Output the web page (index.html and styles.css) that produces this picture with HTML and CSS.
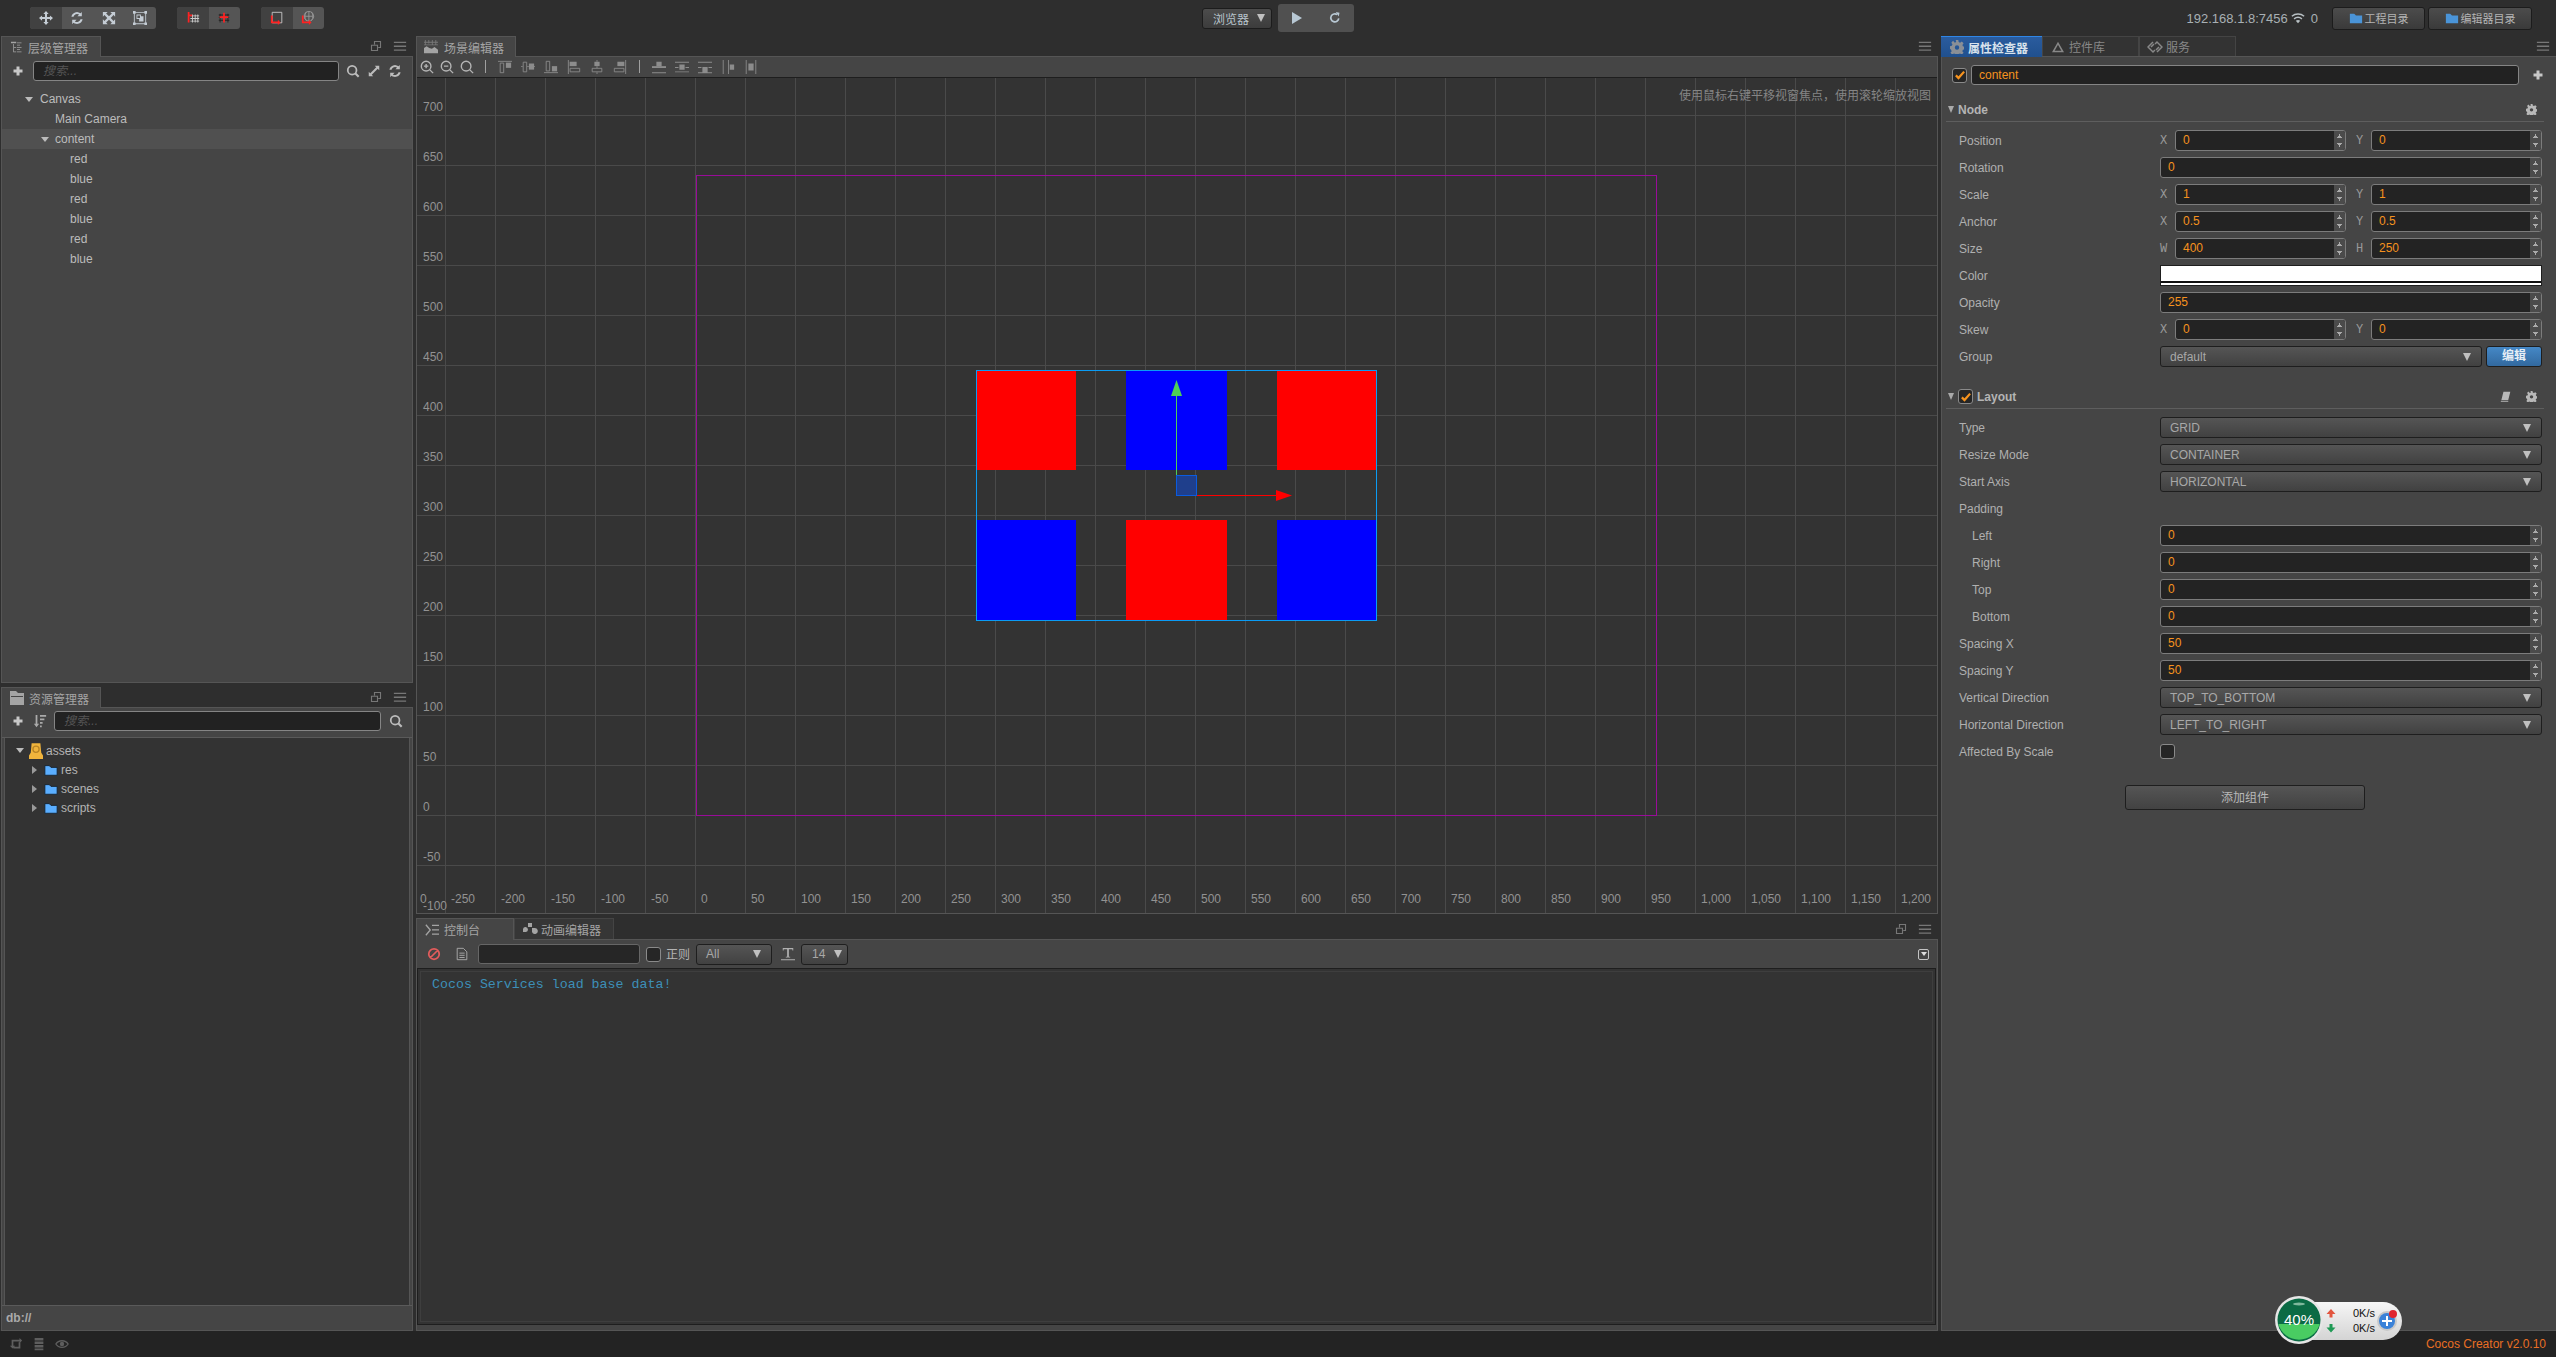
FILE: index.html
```html
<!DOCTYPE html>
<html>
<head>
<meta charset="utf-8">
<title>Cocos Creator v2.0.10</title>
<link rel="stylesheet" href="styles.css">
</head>
<body>

<svg class="defs" width="0" height="0">
	<symbol id="i-move" viewBox="0 0 16 16"><path d="M8 0l3 3.500H9.200v3.300h3.300V5L16 8l-3.500 3V9.200H9.200v3.300H11L8 16l-3-3.500h1.800V9.200H3.500V11L0 8l3.500-3v1.800h3.300V3.500H5z"/></symbol>
	<symbol id="i-rotate" viewBox="0 0 16 16"><path d="M13.500 1v5h-5l1.900-1.900A4.200 4.200 0 0 0 4 6.500H1.600a6.600 6.600 0 0 1 10.500-3.900zM2.500 15v-5h5l-1.900 1.900A4.200 4.200 0 0 0 12 9.500h2.400a6.600 6.600 0 0 1-10.500 3.900z"/></symbol>
	<symbol id="i-refresh" viewBox="0 0 16 16"><path fill="none" stroke="currentColor" stroke-width="2.200" d="M11 3.600A5.300 5.300 0 1 0 13 8.500"/><path d="M9 0l5 1-1 5z"/></symbol>
	<symbol id="i-scale" viewBox="0 0 16 16"><path d="M1 1h5.500L4.700 2.800 8 6l3.300-3.200L9.500 1H15v5.500l-1.800-1.800L10 8l3.200 3.300 1.800-1.800V15H9.500l1.800-1.800L8 10l-3.300 3.200L6.500 15H1V9.500l1.800 1.800L6 8 2.800 4.700 1 6.500z"/></symbol>
	<symbol id="i-rect" viewBox="0 0 16 16"><path d="M0 0h3v1h10V0h3v3h-1v10h1v3h-3v-1H3v1H0v-3h1V3H0zm2 3v10h1v1h10v-1h1V3h-1V2H3v1z"/><path d="M4 4h5v2h3v6H7V9H4zm1 1v3h3V5z"/></symbol>
	<symbol id="i-gridpivot" viewBox="0 0 16 16"><path fill="#ccc" d="M5 5h10v1H5zm0 3h10v1H5zm0 3h10v1H5zM7 4h1v9H7zm3 0h1v9h-1zm3 0h1v9h-1z"/><path fill="#f22" d="M2 1h2v3h3v2H4v7H2z"/></symbol>
	<symbol id="i-gridcenter" viewBox="0 0 16 16"><path fill="#222" d="M2 4h12v1H2zm0 3h12v1H2zm0 3h12v1H2zm1-7h1v10H3zm9 0h1v10h-1z"/><path fill="#f22" d="M7 2h2v4h4v2H9v5H7V8H3V6h4z"/></symbol>
	<symbol id="i-local" viewBox="0 0 16 16"><path fill="none" stroke="#ccc" d="M2.500 1.500h11v12h-11z"/><path fill="#f22" d="M1 5h2v7h6v-2l3 3-3 3v-2H1z"/></symbol>
	<symbol id="i-global" viewBox="0 0 16 16"><circle cx="9" cy="6" r="5.500" fill="none" stroke="#999"/><path fill="none" stroke="#999" d="M3.500 6h11M9 .5v11M6 1c-2 3-2 7 0 10M12 1c2 3 2 7 0 10"/><path fill="#f22" d="M1 5h2v7h6v-2l3 3-3 3v-2H1z"/></symbol>
	<symbol id="i-tree" viewBox="0 0 16 16"><path d="M0 1h7v2H0zm3 3h1v10h3v1H3V8h4v1H3zm5-2h6v1H8zm0 6h6v1H8zm0 6h6v1H8zM8 5h4v1H8zm0 6h4v1H8z"/></symbol>
	<symbol id="i-scene" viewBox="0 0 16 16"><path opacity=".55" d="M1 0h1v5H1zm4 0h1v4H5zm4 0h1v5H9zm4 0h1v6h-1zM0 2h16v1H0zm0 3h16v1H0z"/><path d="M0 15V9l3-2 3 2 3 1 3-2 4 3v4z"/></symbol>
	<symbol id="i-gear" viewBox="0 0 16 16"><path fill-rule="evenodd" d="M6.500 0h3l.4 2.300 1.600.7L13.500 1.700l2 2.100-1.300 1.900.7 1.600 2.100.5v3l-2.200.4-.7 1.600 1.400 1.900-2.100 2-1.900-1.300-1.600.6-.4 2.200h-3l-.4-2.200-1.600-.6-1.900 1.300-2.100-2 1.400-1.900-.7-1.600L0 10V7l2.100-.5.700-1.600-1.300-1.900 2-2.100L5.500 3l1.600-.7zM8 6a2.500 2.500 0 1 0 0 5 2.500 2.500 0 0 0 0-5z"/></symbol>
	<symbol id="i-tri" viewBox="0 0 16 16"><path fill-rule="evenodd" d="M8 1l8 14H0zm0 4l-4.500 8h9z"/></symbol>
	<symbol id="i-cloud" viewBox="0 0 16 16"><path fill="none" stroke="currentColor" stroke-width="1.500" d="M6 3L1 8l5 5 2-2M10 13l5-5-5-5-2 2"/><path fill="none" stroke="currentColor" stroke-width="1.500" d="M4 8l3-3M9 11l3-3"/></symbol>
	<symbol id="i-folder" viewBox="0 0 16 16"><path d="M1 3h5l2 2h7v9H1z"/></symbol>
	<symbol id="i-foldergrey" viewBox="0 0 16 16"><path d="M1 1h6l2 2h6v12H1z"/><path fill="#454545" d="M2 6h12v1H2z"/></symbol>
	<symbol id="i-popout" viewBox="0 0 16 16"><path fill="none" stroke="currentColor" stroke-width="1.500" d="M2 7h8v7H2zM6 6V2h8v8h-3"/></symbol>
	<symbol id="i-menu" viewBox="0 0 16 16"><path d="M1 3h14v1.500H1zm0 4.500h14V9H1zM1 12h14v1.500H1z"/></symbol>
	<symbol id="i-plus" viewBox="0 0 16 16"><path d="M6 2h4v4h4v4h-4v4H6v-4H2V6h4z"/></symbol>
	<symbol id="i-search" viewBox="0 0 16 16"><path fill="none" stroke="currentColor" stroke-width="2" d="M7 2a5 5 0 1 0 0 10A5 5 0 0 0 7 2z"/><path fill="none" stroke="currentColor" stroke-width="2.500" d="M10.500 10.500l4 4"/></symbol>
	<symbol id="i-expand" viewBox="0 0 16 16"><path d="M9 1h6v6l-2-2-8 8 2 2H1V9l2 2 8-8z"/></symbol>
	<symbol id="i-sort" viewBox="0 0 16 16"><path d="M3 1h2v10h2l-3 4-3-4h2zM8 1h7v2H8zm0 4h5v2H8zm0 4h3v2H8zm0 4h2v2H8z"/></symbol>
	<symbol id="i-zoomin" viewBox="0 0 16 16"><path fill="none" stroke="currentColor" stroke-width="1.600" d="M7 1.500a5.500 5.500 0 1 0 0 11 5.500 5.500 0 0 0 0-11zM11 11l4 4M4.500 7h5M7 4.500v5"/></symbol>
	<symbol id="i-zoomout" viewBox="0 0 16 16"><path fill="none" stroke="currentColor" stroke-width="1.600" d="M7 1.500a5.500 5.500 0 1 0 0 11 5.500 5.500 0 0 0 0-11zM11 11l4 4M4.500 7h5"/></symbol>
	<symbol id="i-zoomreset" viewBox="0 0 16 16"><path fill="none" stroke="currentColor" stroke-width="1.600" d="M7 1.500a5.500 5.500 0 1 0 0 11 5.500 5.500 0 0 0 0-11zM11 11l4 4"/></symbol>
	<symbol id="a-top" viewBox="0 0 16 16"><path d="M0 1h16v1H0z"/><path fill="none" stroke="currentColor" d="M2.500 3.500h4v11h-4z"/><path d="M9 3h6v6H9z"/></symbol>
	<symbol id="a-vmid" viewBox="0 0 16 16"><path d="M0 7h2v1H0zm7 0h2v1H7zm7 0h2v1h-2z"/><path fill="none" stroke="currentColor" d="M2.500 2.500h4v11h-4z"/><path d="M9 4h6v7H9z"/></symbol>
	<symbol id="a-bot" viewBox="0 0 16 16"><path d="M0 14h16v1H0z"/><path fill="none" stroke="currentColor" d="M2.500 1.500h4v11h-4z"/><path d="M9 7h6v6H9z"/></symbol>
	<symbol id="a-left" viewBox="0 0 16 16"><path d="M1 0h1v16H1z"/><path d="M3 2h8v5H3z"/><path fill="none" stroke="currentColor" d="M3.500 9.500h11v4h-11z"/></symbol>
	<symbol id="a-hmid" viewBox="0 0 16 16"><path d="M7.500 0h1v2h-1zm0 7h1v2h-1zm0 7h1v2h-1z"/><path d="M5 2h6v5H5z"/><path fill="none" stroke="currentColor" d="M2.500 9.500h11v4h-11z"/></symbol>
	<symbol id="a-right" viewBox="0 0 16 16"><path d="M14 0h1v16h-1z"/><path d="M5 2h8v5H5z"/><path fill="none" stroke="currentColor" d="M1.500 9.500h11v4h-11z"/></symbol>
	<symbol id="d-top" viewBox="0 0 16 16"><path d="M0 8h16v1H0zM0 14h16v1H0zM5 2h6v5H5z"/><path d="M0 7h16v1H0z"/></symbol>
	<symbol id="d-mid" viewBox="0 0 16 16"><path d="M0 2h16v1H0zM0 13h16v1H0zM5 5h6v6H5zM0 8h4v1H0zm12 0h4v1h-4z"/></symbol>
	<symbol id="d-bot" viewBox="0 0 16 16"><path d="M0 2h16v1H0zM0 14h16v1H0zM5 8h6v6H5zM0 8h4v1H0zm12 0h4v1h-4z"/></symbol>
	<symbol id="d-left" viewBox="0 0 16 16"><path d="M2 0h1v16H2zm6 0h1v16H8zM10 5h5v6h-5z"/></symbol>
	<symbol id="d-hmid" viewBox="0 0 16 16"><path d="M2 0h1v16H2zm11 0h1v16h-1zM5 4h6v8H5z"/></symbol>
	<symbol id="i-check" viewBox="0 0 16 16"><path fill="none" stroke="#f7931e" stroke-width="3" d="M2.500 8.500l3.500 3.500 7.500-8.500"/></symbol>
	<symbol id="i-book" viewBox="0 0 16 16"><path d="M5 1h10l-3 12H2zM1.500 14H12v1.500H1z"/></symbol>
	<symbol id="i-console" viewBox="0 0 16 16"><path fill="none" stroke="currentColor" stroke-width="1.500" d="M1 2l5 6-5 6"/><path d="M8 2h8v1.500H8zm0 5h8v1.500H8zm0 5h8v1.500H8z"/></symbol>
	<symbol id="i-anim" viewBox="0 0 16 16"><path d="M1 8a2.500 2.500 0 1 1 3 3H1zm5-6h4v4H6zm4 5h3a3 3 0 1 1-3 4z"/></symbol>
	<symbol id="i-stop" viewBox="0 0 16 16"><path fill="none" stroke="#e25c5c" stroke-width="2" d="M8 2a6 6 0 1 0 0 12A6 6 0 0 0 8 2zM4 12L12 4"/></symbol>
	<symbol id="i-doc" viewBox="0 0 16 16"><path fill="none" stroke="currentColor" d="M2.500 1.500h7l4 4v9h-11zM5 7h6M5 9.500h6M5 12h6"/></symbol>
	<symbol id="i-font" viewBox="0 0 16 16"><path d="M2 1h12v3h-1V2.500H9V11h1.500v1h-5v-1H7V2.500H3V4H2zM0 14h16v1H0z"/></symbol>
	<symbol id="i-db" viewBox="0 0 16 16"><path d="M3 1h10v3H3zm0 4h10v3H3zm0 4h10v3H3zm0 4h10v2H3z"/></symbol>
	<symbol id="i-eye" viewBox="0 0 16 16"><path fill="none" stroke="currentColor" stroke-width="1.500" d="M1 8c3-5 11-5 14 0-3 5-11 5-14 0z"/><circle cx="8" cy="8" r="2.500"/></symbol>
	<symbol id="i-wifi" viewBox="0 0 16 16"><path fill="none" stroke="currentColor" stroke-width="1.600" d="M1 6c4-3.500 10-3.500 14 0M3.500 9c3-2.500 6-2.500 9 0"/><path d="M8 14l-2.500-3c1.500-1 3.500-1 5 0z"/></symbol>
	<symbol id="i-swap" viewBox="0 0 16 16"><path d="M3 3h9V1l3 3-3 3V5H5v5h2l-3 3-3-3h2zM13 6v7H5v-2h6V6z"/></symbol>
	<symbol id="i-lock" viewBox="0 0 16 18"><path d="M3 0h10l1 11 2 3v4H0v-4l2-3z" fill="#f0b43c"/><circle cx="8" cy="7" r="3.500" fill="none" stroke="#b88425" stroke-width="1.500"/></symbol>
</svg>

<div class="topbar">
	<div class="tb-left">
		<div class="tool-group">
			<span class="tool on"><svg class="ico14"><use href="#i-move"/></svg></span>
			<span class="tool"><svg class="ico14"><use href="#i-rotate"/></svg></span>
			<span class="tool"><svg class="ico14"><use href="#i-scale"/></svg></span>
			<span class="tool"><svg class="ico14"><use href="#i-rect"/></svg></span>
		</div>
		<div class="tool-group">
			<span class="tool on"><svg class="ico14"><use href="#i-gridpivot"/></svg></span>
			<span class="tool"><svg class="ico14"><use href="#i-gridcenter"/></svg></span>
		</div>
		<div class="tool-group">
			<span class="tool on"><svg class="ico14"><use href="#i-local"/></svg></span>
			<span class="tool"><svg class="ico14"><use href="#i-global"/></svg></span>
		</div>
	</div>
	<div class="tb-center">
		<div class="browser-select">浏览器<i class="arrow-down"></i></div>
		<div class="play-group">
			<span class="play-btn"><i class="play-tri"></i></span>
			<span class="play-btn"><svg class="ico12"><use href="#i-refresh"/></svg></span>
		</div>
	</div>
	<div class="tb-right">
		<span class="ip">192.168.1.8:7456</span>
		<svg class="ico14 wifi"><use href="#i-wifi"/></svg>
		<span class="wifi-count">0</span>
		<div class="dir-btn btn-project"><svg class="ico14 blue"><use href="#i-folder"/></svg>工程目录</div>
		<div class="dir-btn btn-editor"><svg class="ico14 blue"><use href="#i-folder"/></svg>编辑器目录</div>
	</div>
</div>

<div class="main">
	<div class="col col-left">
		<div class="panel panel-hierarchy">
			<div class="tabs">
				<div class="tab active tab-hier"><svg class="ico12"><use href="#i-tree"/></svg>层级管理器</div>
				<div class="tab-tools">
					<svg class="ico12"><use href="#i-popout"/></svg>
					<svg class="ico14"><use href="#i-menu"/></svg>
				</div>
			</div>
			<div class="panel-body">
				<div class="search-row">
					<svg class="ico12 plus"><use href="#i-plus"/></svg>
					<div class="search">搜索...</div>
					<svg class="ico14 sr-btn"><use href="#i-search"/></svg>
					<svg class="ico12 sr-btn"><use href="#i-expand"/></svg>
					<svg class="ico14 sr-btn"><use href="#i-rotate"/></svg>
				</div>
				<ul class="tree">
					<li class="d0"><i class="tw"></i>Canvas</li>
					<li class="d1">Main Camera</li>
					<li class="d1 selected"><i class="tw"></i>content</li>
					<li class="d2">red</li>
					<li class="d2">blue</li>
					<li class="d2">red</li>
					<li class="d2">blue</li>
					<li class="d2">red</li>
					<li class="d2">blue</li>
				</ul>
			</div>
		</div>
		<div class="panel panel-assets">
			<div class="tabs">
				<div class="tab active tab-asset"><svg class="ico16"><use href="#i-foldergrey"/></svg>资源管理器</div>
				<div class="tab-tools">
					<svg class="ico12"><use href="#i-popout"/></svg>
					<svg class="ico14"><use href="#i-menu"/></svg>
				</div>
			</div>
			<div class="panel-body">
				<div class="asset-tools">
					<svg class="ico12 plus"><use href="#i-plus"/></svg>
					<svg class="ico14 sort"><use href="#i-sort"/></svg>
					<div class="search">搜索...</div>
					<svg class="ico14 sr-btn"><use href="#i-search"/></svg>
				</div>
				<ul class="asset-tree">
					<li class="root"><i class="tw"></i><svg class="lock"><use href="#i-lock"/></svg>assets</li>
					<li><i class="tw closed"></i><svg class="ico14 fold"><use href="#i-folder"/></svg>res</li>
					<li><i class="tw closed"></i><svg class="ico14 fold"><use href="#i-folder"/></svg>scenes</li>
					<li><i class="tw closed"></i><svg class="ico14 fold"><use href="#i-folder"/></svg>scripts</li>
				</ul>
				<div class="db-path">db://</div>
			</div>
		</div>
	</div>

	<div class="col col-center">
		<div class="panel panel-scene">
			<div class="tabs">
				<div class="tab active tab-scene"><svg class="ico14"><use href="#i-scene"/></svg>场景编辑器</div>
				<div class="tab-tools">
					<svg class="ico14"><use href="#i-menu"/></svg>
				</div>
			</div>
			<div class="panel-body">
				<div class="scene-tools">
					<span class="zb"><svg class="ico14"><use href="#i-zoomin"/></svg></span>
					<span class="zb"><svg class="ico14"><use href="#i-zoomout"/></svg></span>
					<span class="zb"><svg class="ico14"><use href="#i-zoomreset"/></svg></span>
					<span class="sep"></span>
					<span class="ab"><svg class="ico14"><use href="#a-top"/></svg></span>
					<span class="ab"><svg class="ico14"><use href="#a-vmid"/></svg></span>
					<span class="ab"><svg class="ico14"><use href="#a-bot"/></svg></span>
					<span class="ab"><svg class="ico14"><use href="#a-left"/></svg></span>
					<span class="ab"><svg class="ico14"><use href="#a-hmid"/></svg></span>
					<span class="ab"><svg class="ico14"><use href="#a-right"/></svg></span>
					<span class="sep"></span>
					<span class="ab"><svg class="ico14"><use href="#d-top"/></svg></span>
					<span class="ab"><svg class="ico14"><use href="#d-mid"/></svg></span>
					<span class="ab"><svg class="ico14"><use href="#d-bot"/></svg></span>
					<span class="ab"><svg class="ico14"><use href="#d-left"/></svg></span>
					<span class="ab"><svg class="ico14"><use href="#d-hmid"/></svg></span>
				</div>
				<div class="scene-view">
					<!-- viewBox uses page coordinates -->
					<svg class="scene-svg" width="1520" height="835" viewBox="417 78 1520 835">
						<defs>
							<pattern id="grid" x="445" y="65" width="50" height="50" patternUnits="userSpaceOnUse">
								<path d="M.5 0V50M0 .5H50" stroke="#4a4a4a" fill="none"/>
							</pattern>
						</defs>
						<rect x="417" y="78" width="1520" height="835" fill="#333"/>
						<rect x="417" y="78" width="1520" height="835" fill="url(#grid)"/>
						<rect x="696.500" y="175.500" width="960" height="640" fill="none" stroke="#990c99"/>
						<rect x="977" y="371" width="99" height="99" fill="#f00"/>
						<rect x="1126" y="371" width="101" height="99" fill="#00f"/>
						<rect x="1277" y="371" width="99" height="99" fill="#f00"/>
						<rect x="977" y="520" width="99" height="100" fill="#00f"/>
						<rect x="1126" y="520" width="101" height="100" fill="#f00"/>
						<rect x="1277" y="520" width="99" height="100" fill="#00f"/>
						<rect x="976.500" y="370.500" width="400" height="250" fill="none" stroke="#0a9cf5"/>
						<path d="M1176.500 395V476" stroke="#4fce56" fill="none"/>
						<path d="M1176.500 380l5.500 16h-11z" fill="#4fce56"/>
						<path d="M1197 495.500H1277" stroke="#f00" fill="none"/>
						<path d="M1276 490l16 5.500-16 5.500z" fill="#f00"/>
						<rect x="1176.500" y="475.500" width="20" height="20" fill="#1f3f8c" stroke="#0a5be0"/>
						<g class="axis-y">
							<text x="423" y="111">700</text>
							<text x="423" y="161">650</text>
							<text x="423" y="211">600</text>
							<text x="423" y="261">550</text>
							<text x="423" y="311">500</text>
							<text x="423" y="361">450</text>
							<text x="423" y="411">400</text>
							<text x="423" y="461">350</text>
							<text x="423" y="511">300</text>
							<text x="423" y="561">250</text>
							<text x="423" y="611">200</text>
							<text x="423" y="661">150</text>
							<text x="423" y="711">100</text>
							<text x="423" y="761">50</text>
							<text x="423" y="811">0</text>
							<text x="423" y="861">-50</text>
							<text x="423" y="910">-100</text>
							<text x="420" y="903">0</text>
						</g>
						<g class="axis-x">
							<text x="451" y="903">-250</text>
							<text x="501" y="903">-200</text>
							<text x="551" y="903">-150</text>
							<text x="601" y="903">-100</text>
							<text x="651" y="903">-50</text>
							<text x="701" y="903">0</text>
							<text x="751" y="903">50</text>
							<text x="801" y="903">100</text>
							<text x="851" y="903">150</text>
							<text x="901" y="903">200</text>
							<text x="951" y="903">250</text>
							<text x="1001" y="903">300</text>
							<text x="1051" y="903">350</text>
							<text x="1101" y="903">400</text>
							<text x="1151" y="903">450</text>
							<text x="1201" y="903">500</text>
							<text x="1251" y="903">550</text>
							<text x="1301" y="903">600</text>
							<text x="1351" y="903">650</text>
							<text x="1401" y="903">700</text>
							<text x="1451" y="903">750</text>
							<text x="1501" y="903">800</text>
							<text x="1551" y="903">850</text>
							<text x="1601" y="903">900</text>
							<text x="1651" y="903">950</text>
							<text x="1701" y="903">1,000</text>
							<text x="1751" y="903">1,050</text>
							<text x="1801" y="903">1,100</text>
							<text x="1851" y="903">1,150</text>
							<text x="1901" y="903">1,200</text>
						</g>
					</svg>
					<div class="scene-hint">使用鼠标右键平移视窗焦点，使用滚轮缩放视图</div>
				</div>
			</div>
		</div>
		<div class="panel panel-console">
			<div class="tabs">
				<div class="tab active tab-console"><svg class="ico14"><use href="#i-console"/></svg>控制台</div>
				<div class="tab tab-anim"><svg class="ico16"><use href="#i-anim"/></svg>动画编辑器</div>
				<div class="tab-tools">
					<svg class="ico12"><use href="#i-popout"/></svg>
					<svg class="ico14"><use href="#i-menu"/></svg>
				</div>
			</div>
			<div class="panel-body">
				<div class="console-tools">
					<svg class="ico14 c-stop"><use href="#i-stop"/></svg>
					<svg class="ico14 c-doc"><use href="#i-doc"/></svg>
					<div class="c-input"></div>
					<span class="check c-check"></span>
					<span class="c-regex">正则</span>
					<div class="select c-all">All<i class="arrow-down"></i></div>
					<svg class="ico14 c-font"><use href="#i-font"/></svg>
					<div class="select c-size">14<i class="arrow-down"></i></div>
					<span class="c-collapse"><i class="arrow-down small"></i></span>
				</div>
				<div class="console-log">Cocos Services load base data!</div>
			</div>
		</div>
	</div>

	<div class="col col-right">
		<div class="panel panel-inspector">
			<div class="tabs">
				<div class="tab tab-blue"><svg class="ico14"><use href="#i-gear"/></svg>属性检查器</div>
				<div class="tab tab-off tab-lib"><svg class="ico12"><use href="#i-tri"/></svg>控件库</div>
				<div class="tab tab-off tab-svc"><svg class="ico16"><use href="#i-cloud"/></svg>服务</div>
				<div class="tab-tools">
					<svg class="ico14"><use href="#i-menu"/></svg>
				</div>
			</div>
			<div class="panel-body">
				<div class="name-row">
					<span class="check checked"><svg class="ico12"><use href="#i-check"/></svg></span>
					<div class="name-input">content</div>
					<svg class="ico12 name-plus"><use href="#i-plus"/></svg>
				</div>

				<div class="comp-head">
					<i class="arrow-down small"></i><span class="comp-title">Node</span>
					<svg class="comp-gear"><use href="#i-gear"/></svg>
				</div>
				<div class="props">
					<div class="prop"><label>Position</label><div class="vec">
						<span class="axis">X</span><div class="num">0</div><span class="axis second">Y</span><div class="num">0</div>
					</div></div>
					<div class="prop"><label>Rotation</label><div class="num wide">0</div></div>
					<div class="prop"><label>Scale</label><div class="vec">
						<span class="axis">X</span><div class="num">1</div><span class="axis second">Y</span><div class="num">1</div>
					</div></div>
					<div class="prop"><label>Anchor</label><div class="vec">
						<span class="axis">X</span><div class="num">0.5</div><span class="axis second">Y</span><div class="num">0.5</div>
					</div></div>
					<div class="prop"><label>Size</label><div class="vec">
						<span class="axis">W</span><div class="num">400</div><span class="axis second">H</span><div class="num">250</div>
					</div></div>
					<div class="prop"><label>Color</label><div class="color-box"><i></i></div></div>
					<div class="prop"><label>Opacity</label><div class="num wide">255</div></div>
					<div class="prop"><label>Skew</label><div class="vec">
						<span class="axis">X</span><div class="num">0</div><span class="axis second">Y</span><div class="num">0</div>
					</div></div>
					<div class="prop"><label>Group</label><div class="group-val">
						<div class="select grow">default<i class="arrow-down"></i></div>
						<div class="edit-btn">编辑</div>
					</div></div>
				</div>

				<div class="comp-head second">
					<i class="arrow-down small"></i>
					<span class="check checked"><svg class="ico12"><use href="#i-check"/></svg></span>
					<span class="comp-title">Layout</span>
					<svg class="comp-book"><use href="#i-book"/></svg>
					<svg class="comp-gear"><use href="#i-gear"/></svg>
				</div>
				<div class="props">
					<div class="prop"><label>Type</label><div class="select wide">GRID<i class="arrow-down"></i></div></div>
					<div class="prop"><label>Resize Mode</label><div class="select wide">CONTAINER<i class="arrow-down"></i></div></div>
					<div class="prop"><label>Start Axis</label><div class="select wide">HORIZONTAL<i class="arrow-down"></i></div></div>
					<div class="prop"><label>Padding</label></div>
					<div class="prop"><label class="sub">Left</label><div class="num wide">0</div></div>
					<div class="prop"><label class="sub">Right</label><div class="num wide">0</div></div>
					<div class="prop"><label class="sub">Top</label><div class="num wide">0</div></div>
					<div class="prop"><label class="sub">Bottom</label><div class="num wide">0</div></div>
					<div class="prop"><label>Spacing X</label><div class="num wide">50</div></div>
					<div class="prop"><label>Spacing Y</label><div class="num wide">50</div></div>
					<div class="prop"><label>Vertical Direction</label><div class="select wide">TOP_TO_BOTTOM<i class="arrow-down"></i></div></div>
					<div class="prop"><label>Horizontal Direction</label><div class="select wide">LEFT_TO_RIGHT<i class="arrow-down"></i></div></div>
					<div class="prop"><label>Affected By Scale</label><span class="check"></span></div>
				</div>

				<div class="add-comp">添加组件</div>
			</div>
		</div>
	</div>
</div>

<div class="statusbar">
	<svg class="ico14"><use href="#i-swap"/></svg>
	<svg class="ico14"><use href="#i-db"/></svg>
	<svg class="ico14"><use href="#i-eye"/></svg>
	<span class="version">Cocos Creator v2.0.10</span>
</div>

<!-- net meter that floats over the window -->
<svg class="net-meter" width="130" height="50" viewBox="0 0 130 50">
	<defs>
		<linearGradient id="pill" x1="0" y1="0" x2="0" y2="1">
			<stop offset="0" stop-color="#f6f6f6"/><stop offset="1" stop-color="#d4d4d4"/>
		</linearGradient>
	</defs>
	<rect x="20" y="7" width="108" height="38" rx="19" fill="url(#pill)"/>
	<circle cx="25" cy="25" r="24" fill="#e6e6e6"/>
	<circle cx="25" cy="25" r="21.500" fill="#0b6b45"/>
	<path d="M4.300 29h41.400a21.500 21.500 0 0 1-41.400 0z" fill="#49cc62"/>
	<ellipse cx="25" cy="9" rx="6" ry="1.500" fill="#7fb89d"/>
	<text class="nm-pct" x="25" y="30" text-anchor="middle">40%</text>
	<path d="M57 14l4.500 5h-3v3.500h-3V19h-3z" fill="#e2553f"/>
	<path d="M57 37.500l4.500-5h-3V29h-3v3.500h-3z" fill="#1f9a55"/>
	<text class="nm-rate" x="90" y="22">0K/s</text>
	<text class="nm-rate" x="90" y="37">0K/s</text>
	<circle cx="113" cy="26" r="10" fill="#c8c8c8"/>
	<circle cx="113" cy="26" r="8" fill="#3b82d8"/>
	<path d="M112 21h2v4h4v2h-4v4h-2v-4h-4v-2h4z" fill="#fff"/>
	<circle cx="119" cy="19" r="4" fill="#e0242f"/>
</svg>

</body>
</html>
```

FILE: styles.css
```css
* {
	box-sizing: border-box;
}

html, body {
	margin: 0;
	padding: 0;
}

body {
	position: relative;
	width: 2556px;
	height: 1357px;
	overflow: hidden;
	background: #2e2e2e;
	color: #b4b4b4;
	font-family: "Liberation Sans", "Noto Sans CJK SC", sans-serif;
	font-size: 12px;
}

ul {
	list-style: none;
	margin: 0;
	padding: 0;
}

i {
	font-style: normal;
}

.defs {
	position: absolute;
}

svg {
	fill: currentColor;
	flex: none;
}

.ico12 { width: 12px; height: 12px; }
.ico14 { width: 14px; height: 14px; }
.ico16 { width: 16px; height: 16px; }
.blue { color: #4a94d8; }

/* top bar */
.topbar {
	display: flex;
	align-items: center;
	height: 36px;
}

.tb-left {
	display: flex;
	gap: 21px;
	width: 1202px;
	padding-left: 30px;
}

.tool-group {
	display: flex;
	height: 22px;
	border-radius: 3px;
	overflow: hidden;
	background: #555;
	color: #c4ccd4;
}

.tool {
	display: flex;
	align-items: center;
	justify-content: center;
	width: 31.5px;
}

.tool.on {
	background: #414141;
}

.tb-center {
	display: flex;
	align-items: center;
	gap: 6px;
}

.browser-select {
	display: flex;
	align-items: center;
	justify-content: space-between;
	width: 70px;
	height: 21px;
	padding: 0 6px 0 10px;
	border: 1px solid #1c1c1c;
	border-radius: 3px;
	background: linear-gradient(#4c4c4c, #3c3c3c);
	color: #b8c4cc;
}

.arrow-down {
	display: inline-block;
	width: 0;
	height: 0;
	border-left: 4px solid transparent;
	border-right: 4px solid transparent;
	border-top: 8px solid #c0c0c0;
}

.arrow-down.small {
	border-left-width: 3.5px;
	border-right-width: 3.5px;
	border-top-width: 7px;
	border-top-color: #aaa;
}

.play-group {
	display: flex;
	width: 76px;
	height: 28px;
	border-radius: 3px;
	background: #505050;
	color: #b8c8d4;
}

.play-btn {
	display: flex;
	align-items: center;
	justify-content: center;
	width: 38px;
}

.play-tri {
	width: 0;
	height: 0;
	border-top: 6px solid transparent;
	border-bottom: 6px solid transparent;
	border-left: 10px solid #b8c8d4;
}

.tb-right {
	display: flex;
	align-items: center;
	margin-left: auto;
	padding-right: 24px;
}

.ip {
	margin-right: 3px;
	color: #a8b0b4;
	font-size: 13px;
}

.wifi {
	color: #b8c0c4;
}

.wifi-count {
	margin: 0 14px 0 6px;
	color: #a8b0b4;
	font-size: 13px;
}

.dir-btn {
	display: flex;
	align-items: center;
	justify-content: center;
	gap: 2px;
	height: 23px;
	border: 1px solid #1c1c1c;
	border-radius: 3px;
	background: linear-gradient(#4c4c4c, #3a3a3a);
	font-size: 11px;
}

.btn-project { width: 93px; margin-right: 3px; }
.btn-editor { width: 104px; }

/* panels */
.main {
	display: flex;
	height: 1295px;
}

.col {
	display: flex;
	flex-direction: column;
	gap: 4px;
}

.col-left { width: 412px; margin-left: 1px; }
.col-center { width: 1522px; margin-left: 3px; }
.col-right { width: 615px; margin-left: 3px; }

.panel {
	display: flex;
	flex-direction: column;
	min-height: 0;
}

.panel-hierarchy { height: 647px; }
.panel-assets { flex: 1; }
.panel-scene { height: 878px; }
.panel-console { flex: 1; }
.panel-inspector { flex: 1; }

.tabs {
	display: flex;
	flex: none;
	height: 20px;
}

.panel-console .tabs {
	height: 21px;
}

.tab {
	display: flex;
	align-items: center;
	gap: 5px;
	width: 100px;
	padding-left: 10px;
	border: 1px solid #2a2a2a;
	border-bottom: 0;
	background: #3a3a3a;
	color: #a4a4a4;
	white-space: nowrap;
}

.tab.active {
	border-color: #555;
	background: #454545;
	margin-bottom: -1px;
	position: relative;
	z-index: 1;
}

.tab-hier { padding-left: 9px; }
.tab-asset { padding-left: 7px; gap: 4px; }
.tab-scene { padding-left: 7px; gap: 6px; }
.tab-console { width: 98px; padding-left: 8px; }

.tab-anim {
	padding-left: 7px;
	gap: 3px;
	background: #363636;
	border-color: #444;
}

.tab-blue {
	width: 101px;
	padding-left: 9px;
	gap: 4px;
	border: 0;
	border-top: 1px solid #2f86e6;
	background: linear-gradient(#2a5c9e, #20508e);
	color: #d8e2ec;
	font-weight: bold;
	margin-bottom: -1px;
	position: relative;
	z-index: 1;
}

.tab-blue svg {
	color: #8a8f96;
}

.tab-off {
	width: 97px;
	padding-left: 9px;
	border-color: #444;
	background: #333;
	color: #888;
}

.tab-svc {
	padding-left: 7px;
	gap: 3px;
}

.tab-tools {
	display: flex;
	align-items: center;
	gap: 11px;
	margin-left: auto;
	padding-right: 6px;
	color: #777;
}

.panel-body {
	display: flex;
	flex-direction: column;
	flex: 1;
	min-height: 0;
	border: 1px solid #555;
	background: #454545;
}

/* hierarchy */
.search-row {
	display: flex;
	align-items: center;
	flex: none;
	height: 28px;
	margin-bottom: 4px;
	padding-left: 10px;
	color: #b0b0b0;
}

.plus {
	color: #c8c8c8;
}

.search {
	height: 20px;
	line-height: 18px;
	padding-left: 9px;
	border: 1px solid #858585;
	border-radius: 3px;
	background: #222;
	color: #555;
	font-style: italic;
}

.search-row .search {
	width: 306px;
	margin: 0 7px 0 9px;
}

.sr-btn {
	margin-right: 8px;
	color: #bcbcbc;
}

.tree li {
	display: flex;
	align-items: center;
	height: 20px;
	color: #bcbcbc;
}

.tw {
	width: 0;
	height: 0;
	border-left: 4px solid transparent;
	border-right: 4px solid transparent;
	border-top: 5px solid #bbb;
	margin-right: 4px;
}

.tw.closed {
	margin: 0 7px 0 2px;
	border-top: 4px solid transparent;
	border-bottom: 4px solid transparent;
	border-left: 5px solid #999;
	border-right: 0;
}

.tree .d0 { padding-left: 23px; }
.tree .d1 { padding-left: 53px; }
.tree .d1 .tw { margin-left: -14px; margin-right: 6px; }
.tree .d0 .tw { margin-right: 7px; }
.tree .d2 { padding-left: 68px; }

.tree .selected {
	background: #505050;
}

/* assets */
.asset-tools {
	display: flex;
	align-items: center;
	flex: none;
	height: 30px;
	padding: 0 0 3px 10px;
	border-bottom: 1px solid #5a5a5a;
}

.sort {
	margin: 0 7px 0 9px;
	color: #aaa;
}

.asset-tools .search {
	width: 327px;
	margin-right: 8px;
}

.asset-tree {
	flex: 1;
	margin: 0 2px 0 2px;
	padding-top: 3px;
	background: #333;
	border-left: 1px solid #555;
	border-right: 1px solid #555;
}

.asset-tree li {
	display: flex;
	align-items: center;
	height: 19px;
	padding-left: 25px;
	color: #b4b4b4;
}

.asset-tree .root {
	padding-left: 11px;
}

.asset-tree .root .tw {
	margin-right: 5px;
}

.lock {
	width: 14px;
	height: 16px;
	margin-right: 3px;
}

.fold {
	margin-right: 3px;
	color: #5aaeff;
	stroke: #16222e;
}

.db-path {
	flex: none;
	height: 25px;
	line-height: 24px;
	padding-left: 4px;
	border-top: 1px solid #5a5a5a;
	color: #aaa;
	font-weight: bold;
}

/* scene */
.scene-tools {
	display: flex;
	align-items: center;
	flex: none;
	height: 21px;
	padding-bottom: 1px;
	border-bottom: 1px solid #1e1e1e;
	color: #8c8c8c;
}

.zb {
	display: flex;
	justify-content: center;
	width: 20px;
	color: #b4b4b4;
}

.ab {
	display: flex;
	justify-content: center;
	width: 23px;
}

.sep {
	width: 16px;
	height: 13px;
	background: linear-gradient(#a0a0a0, #a0a0a0) center / 1px 100% no-repeat;
}

.scene-view {
	position: relative;
	flex: 1;
	min-height: 0;
	border-bottom: 1px solid #1e1e1e;
}

.scene-svg {
	display: block;
}

.scene-svg text {
	font-family: "Liberation Sans", sans-serif;
	font-size: 12px;
	fill: #929292;
}

.scene-hint {
	position: absolute;
	top: 8px;
	right: 6px;
	color: #858585;
}

/* console */
.console-tools {
	display: flex;
	align-items: center;
	flex: none;
	height: 28px;
	padding-left: 10px;
	color: #b0b0b0;
}

.c-doc { margin-left: 14px; }

.c-input {
	width: 162px;
	height: 20px;
	margin-left: 9px;
	border: 1px solid #666;
	border-radius: 3px;
	background: #262626;
}

.c-check { margin-left: 6px; }

.c-regex {
	margin: 0 0 2px 5px;
	color: #b4b4b4;
}

.select {
	display: flex;
	align-items: center;
	justify-content: space-between;
	height: 21px;
	padding: 0 10px 0 9px;
	border: 1px solid #1e1e1e;
	border-radius: 3px;
	background: linear-gradient(#555, #414141);
	color: #a8a8a8;
}

.c-all {
	width: 76px;
	margin-left: 6px;
}

.c-font { margin-left: 9px; }

.c-size {
	width: 47px;
	margin-left: 6px;
	padding: 0 5px 0 10px;
}

.c-collapse {
	display: flex;
	align-items: center;
	justify-content: center;
	width: 11px;
	height: 11px;
	margin: 0 8px 0 auto;
	border: 1px solid #c4c4c4;
	border-radius: 2px;
}

.c-collapse .arrow-down {
	border-left-width: 3px;
	border-right-width: 3px;
	border-top-width: 4px;
	border-top-color: #ddd;
}

.console-log {
	flex: 1;
	margin: 0 1px 5px 0;
	padding: 8px 14px;
	border: 1px solid #1e1e1e;
	background: #333;
	box-shadow: inset 0 0 0 2px #333, inset 0 0 0 3px #3e3e3e;
	color: #3d8fb8;
	font-family: "Liberation Mono", monospace;
	font-size: 13.3px;
	line-height: 15px;
}

/* inspector */
.panel-inspector .panel-body {
	border-right: 0;
}

.check {
	display: flex;
	align-items: center;
	justify-content: center;
	flex: none;
	width: 15px;
	height: 15px;
	border: 1px solid #8a8a8a;
	border-radius: 3px;
	background: #262626;
}

.name-row {
	display: flex;
	align-items: center;
	flex: none;
	height: 36px;
	padding-left: 10px;
}

.name-input {
	width: 548px;
	height: 20px;
	line-height: 18px;
	margin-left: 4px;
	padding-left: 7px;
	border: 1px solid #858585;
	border-radius: 3px;
	background: #222;
	color: #f5921e;
}

.name-plus {
	margin-left: 13px;
	color: #c8c8c8;
}

.comp-head {
	display: flex;
	align-items: center;
	flex: none;
	height: 24px;
	margin: 5px 12px 0 4px;
	padding-left: 2px;
	border-bottom: 1px solid #5e5e5e;
	color: #b4b4b4;
}

.comp-head.second {
	margin-top: 15px;
}

.comp-head .check {
	margin-left: 4px;
}

.comp-title {
	margin-left: 4px;
	font-weight: bold;
}

.comp-head.second .comp-title {
	margin-left: 4px;
}

.comp-book {
	width: 11px;
	height: 11px;
	margin-left: auto;
	margin-right: 15px;
	color: #b8b8b8;
}

.comp-gear {
	width: 11px;
	height: 11px;
	margin-right: 7px;
	color: #b8b8b8;
}

.comp-title + .comp-gear {
	margin-left: auto;
}

.props {
	flex: none;
	padding-top: 5px;
}

.prop {
	display: flex;
	align-items: center;
	height: 27px;
	padding-left: 17px;
}

.prop label {
	flex: none;
	width: 201px;
	color: #b0b0b0;
}

.prop label.sub {
	padding-left: 13px;
}

.vec {
	display: flex;
	align-items: center;
	width: 382px;
}

.axis {
	flex: none;
	width: 15px;
	color: #999;
	font-family: "Liberation Mono", monospace;
	font-size: 12px;
}

.axis.second {
	margin-left: 10px;
	width: 15px;
}

.num {
	position: relative;
	flex: 1;
	height: 21px;
	line-height: 19px;
	padding-left: 7px;
	border: 1px solid #7c7c7c;
	border-radius: 3px;
	background: #232323;
	color: #f5921e;
}

.num.wide {
	flex: none;
	width: 382px;
}

/* spinner on the right of a number field */
.num::before {
	content: "";
	position: absolute;
	top: 0;
	right: 0;
	bottom: 0;
	width: 11px;
	background: #4b4b4b;
	border-radius: 0 2px 2px 0;
}

.num::after {
	content: "";
	position: absolute;
	top: 3px;
	right: 2px;
	width: 7px;
	height: 13px;
	background:
		conic-gradient(from 150deg at 50% 0, #aaa 60deg, transparent 0) 0 0 / 7px 4px no-repeat,
		conic-gradient(from -30deg at 50% 100%, #aaa 60deg, transparent 0) 0 100% / 7px 4px no-repeat;
}

.color-box {
	width: 382px;
	height: 21px;
	padding-top: 15px;
	border: 1px solid #1e1e1e;
	background: #fff;
}

.color-box i {
	display: block;
	height: 2px;
	background: #111;
}

.group-val {
	display: flex;
	gap: 4px;
	width: 382px;
}

.grow {
	flex: 1;
}

.select.wide {
	width: 382px;
}

.edit-btn {
	width: 56px;
	height: 21px;
	line-height: 19px;
	border: 1px solid #1e1e1e;
	border-radius: 3px;
	background: linear-gradient(#4588c6, #32699f);
	color: #e6eef6;
	font-weight: bold;
	text-align: center;
}

.add-comp {
	width: 240px;
	height: 25px;
	line-height: 25px;
	margin: 20px 0 0 183px;
	border: 1px solid #1e1e1e;
	border-radius: 3px;
	background: linear-gradient(#555, #424242);
	color: #b8b8b8;
	text-align: center;
}

/* status bar */
.statusbar {
	display: flex;
	align-items: center;
	gap: 9px;
	height: 26px;
	padding: 0 10px 0 9px;
	background: #232323;
	color: #5e5e5e;
}

.version {
	margin-left: auto;
	color: #e96f24;
}

.net-meter {
	position: absolute;
	left: 2274px;
	top: 1295px;
}

.nm-pct {
	font-family: "Liberation Sans", sans-serif;
	font-size: 15px;
	fill: #fff;
}

.nm-rate {
	font-family: "Liberation Sans", sans-serif;
	font-size: 11px;
	fill: #111;
	text-anchor: middle;
}
```
